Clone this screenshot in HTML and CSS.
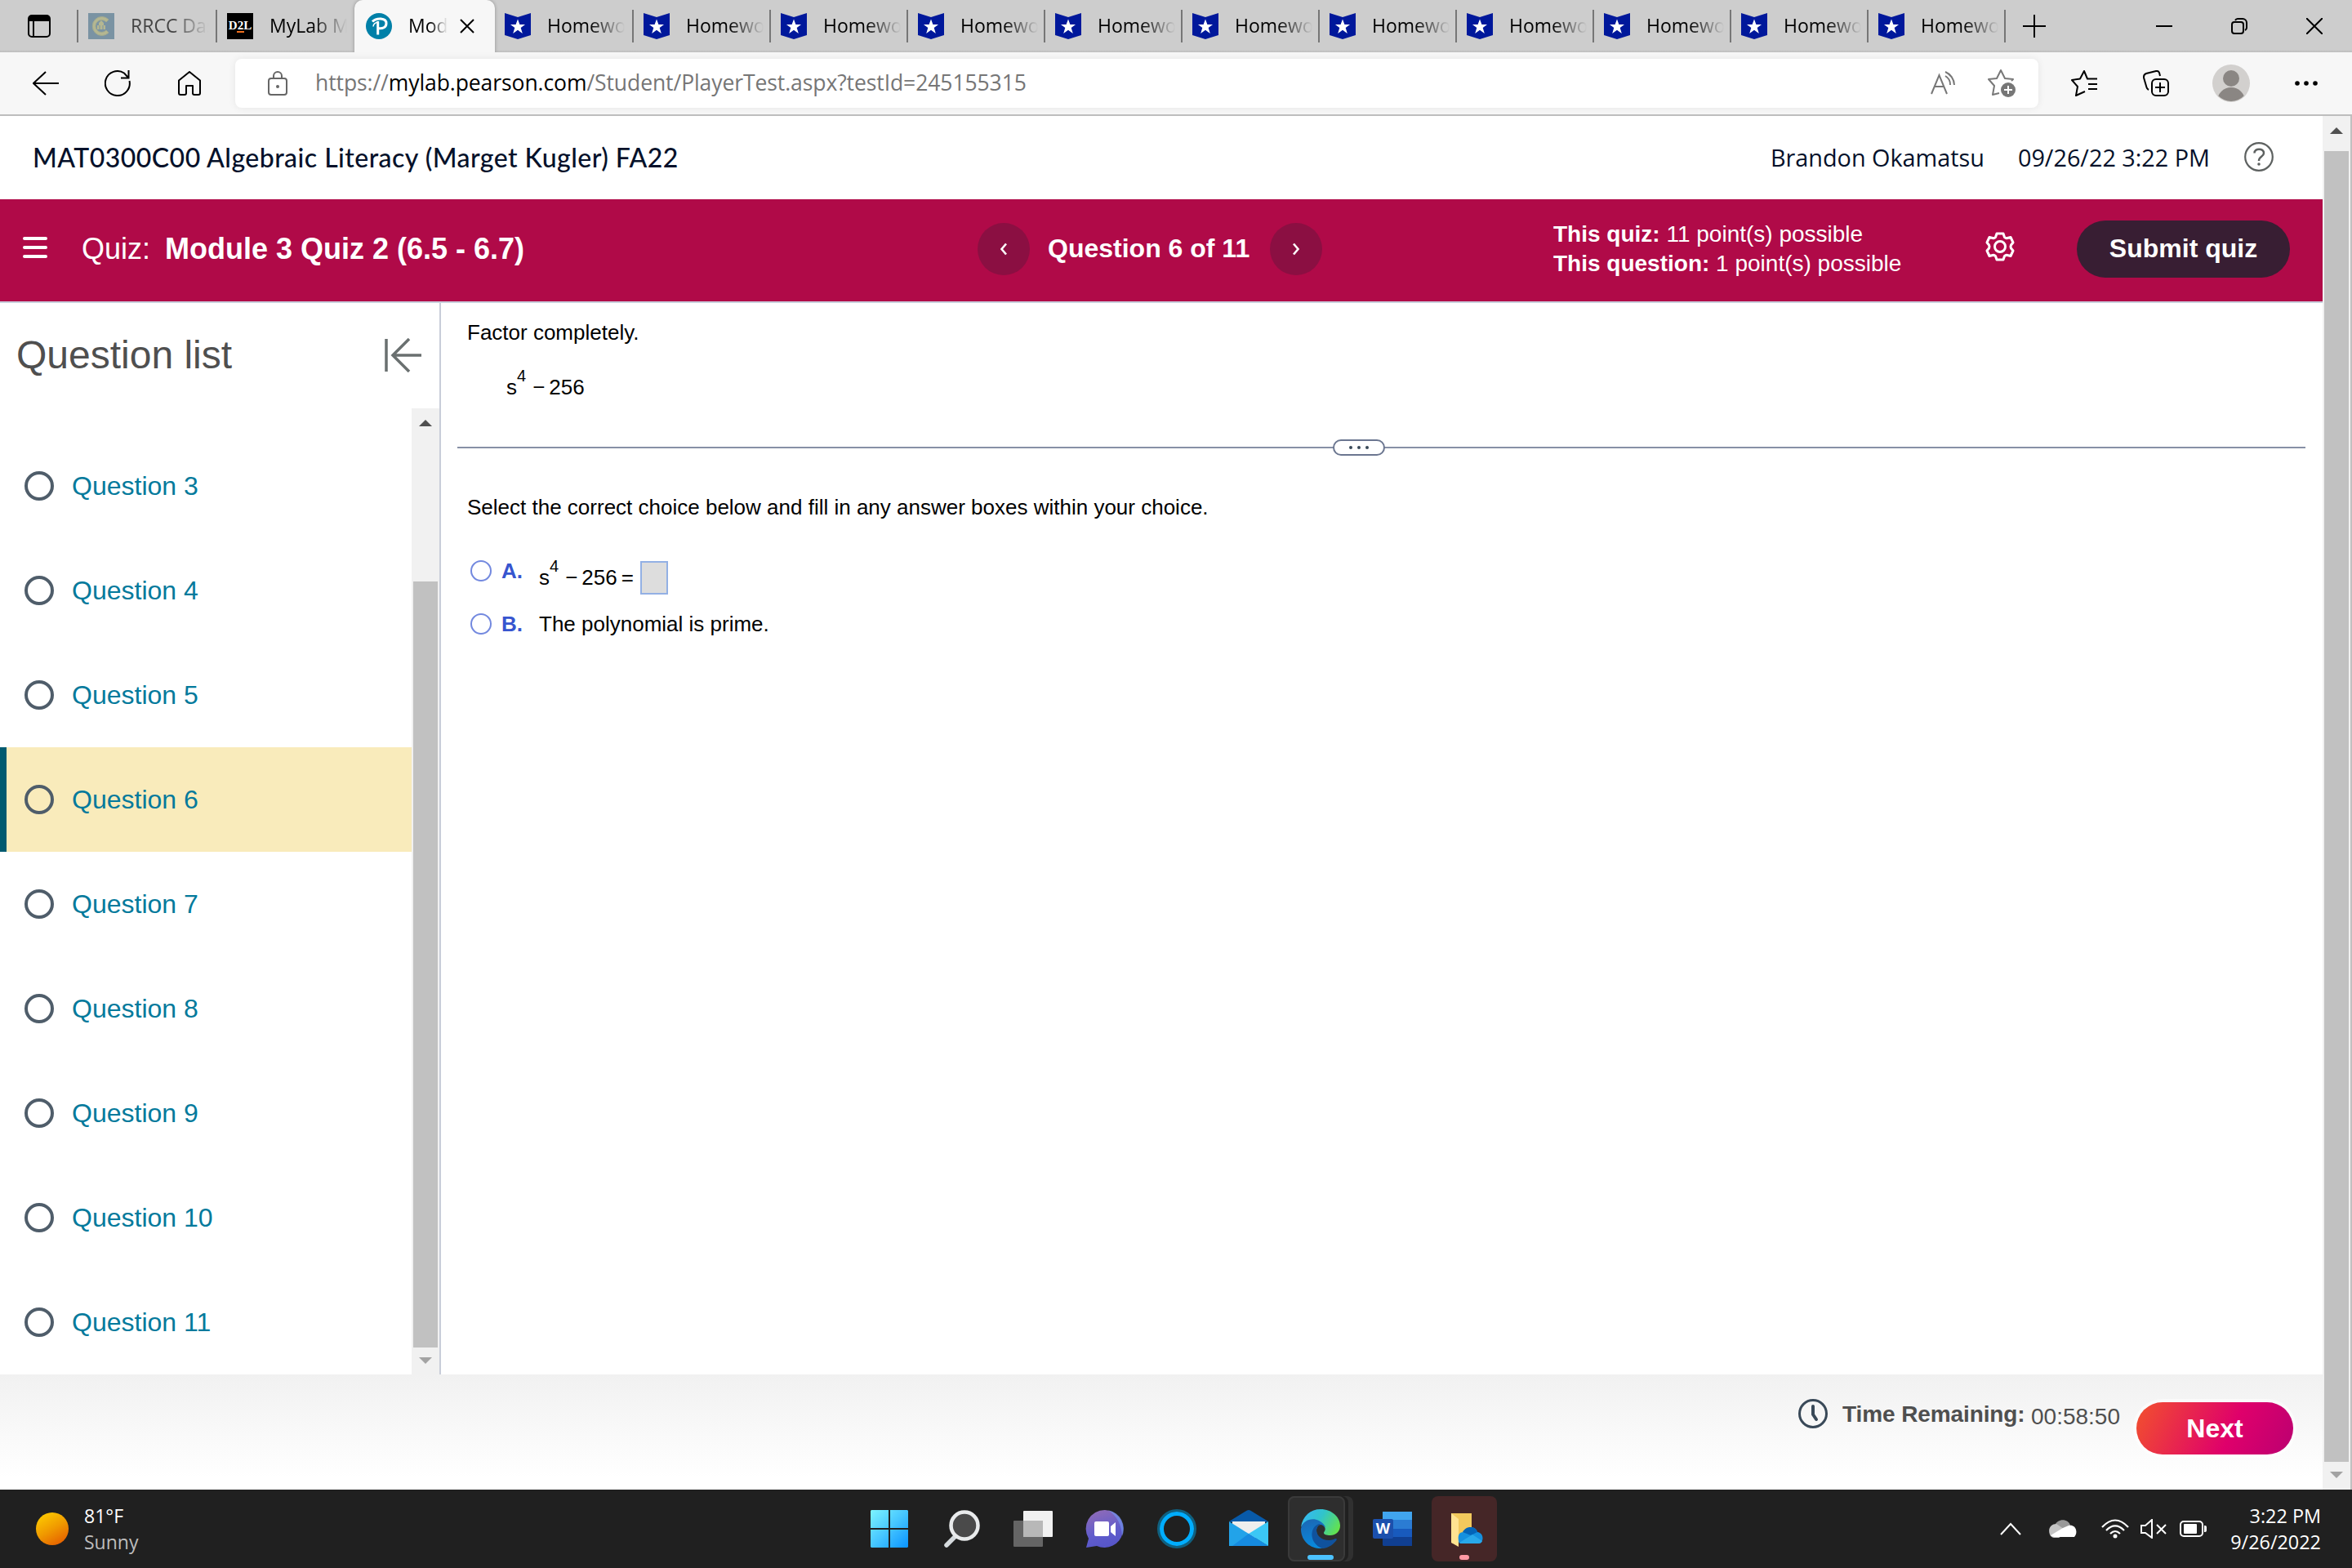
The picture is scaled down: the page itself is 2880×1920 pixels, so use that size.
FILE: index.html
```html
<!DOCTYPE html>
<html lang="en">
<head>
    <meta charset="UTF-8">
    <meta name="viewport" content="width=device-width, initial-scale=1.0">
    <title>Module 3 Quiz 2 (6.5 - 6.7)</title>
    <link rel="stylesheet" href="styles.css">
</head>
<body>
    <!-- shared shapes -->
    <svg class="defs" width="0" height="0">
        <symbol id="badge" viewBox="0 0 32 32">
            <path d="M0 0 16 5 32 0V27L16 32 0 27Z" fill="#00189b"/>
            <path d="M16 7.5 18.4 14H25L19.7 17.9 21.8 25 16 20.8 10.2 25 12.3 17.9 7 14H13.6Z" fill="#fff"/>
        </symbol>
    </svg>

    <div class="tabstrip">
        <div class="tab-actions">
            <svg width="28" height="28" viewBox="0 0 28 28"><rect x="1" y="1" width="26" height="26" rx="4" fill="none" stroke="#000" stroke-width="2"/><path d="M1 8V4a3 3 0 0 1 3-3h20a3 3 0 0 1 3 3v4Z"/><path d="M7 8v19" stroke="#000" stroke-width="2"/></svg>
        </div>
        <div class="tab first muted">
            <svg class="favicon" viewBox="0 0 32 32"><rect width="32" height="32" fill="#7a93a3"/><path d="M25 8A11.500 11.500 0 1 0 25 24L22 21A7.500 7.500 0 1 1 22 11Z" fill="#b5b791" stroke="#a3ab8f"/><path d="M11 20v-5h2v-3l3-3 3 3v3h2v5Z" fill="#b5b791"/><path d="M14 20v-5m4 5v-5" stroke="#7a93a3"/></svg>
            <span class="tab-label">RRCC Dashboard</span>
        </div>
        <div class="tab plain">
            <span class="favicon d2l">D2L</span>
            <span class="tab-label">MyLab Math</span>
        </div>
        <div class="tab active">
            <svg class="favicon" viewBox="0 0 32 32"><circle cx="16" cy="16" r="16" fill="#0080a8"/><path d="M8 10.500C13 5.500 25 5.500 25 12.500C25 17.500 20.500 19.500 15 18.500M14.700 10V26.500" fill="none" stroke="#fff" stroke-width="3"/><path d="M9 16.500c0-3 3-5.500 7-5.500" fill="none" stroke="#fff" stroke-width="1.500"/></svg>
            <span class="tab-label">Module 3</span>
            <svg class="tab-close" width="18" height="18" viewBox="0 0 18 18"><path d="M1 1 17 17M17 1 1 17" stroke="#000" stroke-width="2"/></svg>
        </div>
        <div class="tab first"><svg class="favicon"><use href="#badge"/></svg><span class="tab-label">Homework</span></div>
        <div class="tab"><svg class="favicon"><use href="#badge"/></svg><span class="tab-label">Homework</span></div>
        <div class="tab"><svg class="favicon"><use href="#badge"/></svg><span class="tab-label">Homework</span></div>
        <div class="tab"><svg class="favicon"><use href="#badge"/></svg><span class="tab-label">Homework</span></div>
        <div class="tab"><svg class="favicon"><use href="#badge"/></svg><span class="tab-label">Homework</span></div>
        <div class="tab"><svg class="favicon"><use href="#badge"/></svg><span class="tab-label">Homework</span></div>
        <div class="tab"><svg class="favicon"><use href="#badge"/></svg><span class="tab-label">Homework</span></div>
        <div class="tab"><svg class="favicon"><use href="#badge"/></svg><span class="tab-label">Homework</span></div>
        <div class="tab"><svg class="favicon"><use href="#badge"/></svg><span class="tab-label">Homework</span></div>
        <div class="tab"><svg class="favicon"><use href="#badge"/></svg><span class="tab-label">Homework</span></div>
        <div class="tab"><svg class="favicon"><use href="#badge"/></svg><span class="tab-label">Homework</span></div>
        <svg class="new-tab" width="28" height="28" viewBox="0 0 28 28"><path d="M14 0v28M0 14h28" stroke="#000" stroke-width="2"/></svg>
        <div class="window-controls">
            <svg width="20" height="20" viewBox="0 0 20 20"><path d="M0 10h20" stroke="#000" stroke-width="2"/></svg>
            <svg width="20" height="20" viewBox="0 0 20 20" fill="none" stroke="#000" stroke-width="2"><rect x="1" y="5" width="14" height="14" rx="3"/><path d="M5 3Q6 1 8 1h6a5 5 0 0 1 5 5v6q0 2-2 3"/></svg>
            <svg width="20" height="20" viewBox="0 0 20 20"><path d="M0 0 20 20M20 0 0 20" stroke="#000" stroke-width="2"/></svg>
        </div>
    </div>

    <div class="toolbar">
        <div class="nav-buttons">
            <svg width="32" height="30" viewBox="0 0 32 30" fill="none" stroke="#000" stroke-width="2"><path d="M32 15H1M16 1 1 15 16 29"/></svg>
            <svg width="32" height="32" viewBox="0 0 32 32" fill="none" stroke="#000" stroke-width="2"><path d="M30.500 13A15 15 0 1 1 24 3.500L29 9M29.500 0V9.500H20"/></svg>
            <svg class="home" width="28" height="30" viewBox="0 0 28 30" fill="none" stroke="#000" stroke-width="2" stroke-linejoin="round"><path d="M1 11.500 14 1 27 11.500V27q0 2-2 2H20q-2 0-2-2V18H10v9q0 2-2 2H3q-2 0-2-2Z"/></svg>
        </div>
        <div class="address-bar">
            <svg width="24" height="30" viewBox="0 0 24 30" fill="none" stroke="#666" stroke-width="2"><rect x="1" y="9" width="22" height="20" rx="3"/><path d="M7 9V6a5 5 0 0 1 10 0v3"/><circle cx="12" cy="19" r="2" fill="#666" stroke="none"/></svg>
            <span class="url">https://<span class="host">mylab.pearson.com</span>/Student/PlayerTest.aspx?testId=245155315</span>
            <svg class="read-aloud" width="30" height="30" viewBox="0 0 30 30" fill="none" stroke="#777" stroke-width="2"><path d="M1 28 10.500 5 20 28M5 19H16M18 1a18 18 0 0 1 11 16M18 6a12 12 0 0 1 6 11"/></svg>
            <svg width="34" height="34" viewBox="0 0 34 34" fill="none" stroke="#777" stroke-width="2" stroke-linejoin="round"><path d="M14 29 6 31 8 20 1 12 11 11 16 1 21 11 31 12 29 14"/><circle cx="25" cy="25" r="9" fill="#777" stroke="none"/><path d="M25 20v10M20 25h10" stroke="#fff"/></svg>
        </div>
        <div class="toolbar-icons">
            <svg width="32" height="32" viewBox="0 0 32 32" fill="none" stroke="#000" stroke-width="2" stroke-linejoin="round"><path d="M17 26 6 31 8 20 1 12 11 10.500 16 1 20 10.500H32M21 17H32M21 23H32"/></svg>
            <svg width="32" height="32" viewBox="0 0 32 32" fill="none" stroke="#000" stroke-width="2"><rect x="11" y="11" width="20" height="20" rx="5"/><path d="M21 15v12M15 21h12M7 24Q5 23 4.500 21L1 9Q.7 5 4 4L16 1q3-.5 4 2l1 4"/></svg>
            <svg class="avatar" width="46" height="46" viewBox="0 0 46 46"><clipPath id="avatarClip"><circle cx="23" cy="23" r="22"/></clipPath><circle cx="23" cy="23" r="23" fill="#d2d0ce"/><circle cx="23" cy="17" r="10" fill="#8a8683"/><circle cx="23" cy="45" r="17" fill="#8a8683" clip-path="url(#avatarClip)"/></svg>
            <svg width="28" height="6" viewBox="0 0 28 6"><circle cx="3" cy="3" r="2.800"/><circle cx="14" cy="3" r="2.800"/><circle cx="25" cy="3" r="2.800"/></svg>
        </div>
    </div>

    <div class="viewport">
        <div class="page">
            <header class="course-header">
                <span class="course-title">MAT0300C00 Algebraic Literacy (Marget Kugler) FA22</span>
                <span class="user-name">Brandon Okamatsu</span>
                <span class="date">09/26/22 3:22 PM</span>
                <svg width="36" height="36" viewBox="0 0 36 36" fill="none" stroke="#5d6160" stroke-width="2.200"><circle cx="18" cy="18" r="16.800"/><path d="M12.500 13.500C12.500 7 24 7 24 13.500C24 18 18 17 18 23" stroke-width="2.500"/><circle cx="18" cy="27" r="1.800" fill="#5d6160" stroke="none"/></svg>
            </header>

            <div class="quiz-bar">
                <div class="menu"><i></i><i></i><i></i></div>
                <span class="quiz-word">Quiz:</span>
                <h1>Module 3 Quiz 2 (6.5 - 6.7)</h1>
                <div class="pager">
                    <button class="round"><svg width="10" height="16" viewBox="0 0 10 16"><path d="M8 1.500 2.500 8 8 14.500" fill="none" stroke="#fff" stroke-width="2.600"/></svg></button>
                    <span>Question 6 of 11</span>
                    <button class="round"><svg width="10" height="16" viewBox="0 0 10 16"><path d="M2 1.500 7.500 8 2 14.500" fill="none" stroke="#fff" stroke-width="2.600"/></svg></button>
                </div>
                <div class="points">
                    <div><b>This quiz:</b> 11 point(s) possible</div>
                    <div><b>This question:</b> 1 point(s) possible</div>
                </div>
                <svg class="gear" width="36" height="36" viewBox="0 0 36 36" fill="none" stroke="#fff" stroke-width="3" stroke-linejoin="round"><path d="M14 2H22L23.500 6.500Q25 8 27 7.500L31 6.500 34 13 31.500 16Q30.500 18 31.500 20L34 23 31 29.500 27 28.500Q25 28 23.500 29.500L22 34H14L12.500 29.500Q11 28 9 28.500L5 29.500 2 23 4.500 20Q5.500 18 4.500 16L2 13 5 6.500 9 7.500Q11 8 12.500 6.500Z"/><circle cx="18" cy="18" r="6.500"/></svg>
                <button class="submit">Submit quiz</button>
            </div>

            <div class="player">
                <aside class="sidebar">
                    <div class="sidebar-head">
                        <h2>Question list</h2>
                        <svg width="46" height="42" viewBox="0 0 46 42" fill="none" stroke="#6a7070" stroke-width="3.500"><path d="M3 1V41M46 21H12M31 1 11 21 31 41"/></svg>
                    </div>
                    <div class="sidebar-body">
                        <ul class="question-list">
                            <li><i></i>Question 3</li>
                            <li><i></i>Question 4</li>
                            <li><i></i>Question 5</li>
                            <li class="current"><i></i>Question 6</li>
                            <li><i></i>Question 7</li>
                            <li><i></i>Question 8</li>
                            <li><i></i>Question 9</li>
                            <li><i></i>Question 10</li>
                            <li><i></i>Question 11</li>
                        </ul>
                        <div class="scrollbar list-scroll">
                            <span class="arrow up"></span>
                            <span class="thumb"></span>
                            <span class="arrow down"></span>
                        </div>
                    </div>
                </aside>

                <main class="question">
                    <p class="prompt">Factor completely.</p>
                    <p class="math problem">s<span class="exp">4</span><span class="minus">−</span>256</p>
                    <div class="divider"><span class="handle"><i></i><i></i><i></i></span></div>
                    <p class="prompt instructions">Select the correct choice below and fill in any answer boxes within your choice.</p>
                    <div class="choice choice-a">
                        <span class="radio"></span>
                        <b>A.</b>
                        <span class="math">s<span class="exp">4</span><span class="minus">−</span>256<span class="equals">=</span></span>
                        <span class="answer-box"></span>
                    </div>
                    <div class="choice choice-b">
                        <span class="radio"></span>
                        <b>B.</b>
                        <span>The polynomial is prime.</span>
                    </div>
                </main>
            </div>

            <footer class="player-footer">
                <svg width="36" height="36" viewBox="0 0 36 36" fill="none" stroke="#394958" stroke-width="3"><circle cx="18" cy="18" r="16.500"/><path d="M18 9V19L22 25" stroke-width="4" stroke-linecap="round" stroke-linejoin="round"/></svg>
                <b class="time-label">Time Remaining:</b>
                <span class="time">00:58:50</span>
                <button class="next">Next</button>
            </footer>
        </div>
        <div class="scrollbar page-scroll">
            <span class="arrow up"></span>
            <span class="thumb"></span>
            <span class="arrow down"></span>
        </div>
    </div>

    <div class="taskbar">
        <div class="weather">
            <span class="sun"></span>
            <div>
                <div>81°F</div>
                <div class="condition">Sunny</div>
            </div>
        </div>
        <div class="apps">
            <!-- start -->
            <div class="app">
                <svg width="48" height="48" viewBox="0 0 48 48"><defs><linearGradient id="win" x1="0" y1="0" x2="1" y2="1"><stop offset="0" stop-color="#7df4ff"/><stop offset=".5" stop-color="#46c6ff"/><stop offset="1" stop-color="#0a93ff"/></linearGradient></defs><path d="M2 1H23V23H1V2ZM25 1H46L47 2V23H25ZM1 25H23V47H2L1 46ZM25 25H47V46L46 47H25Z" fill="url(#win)"/></svg>
            </div>
            <!-- search -->
            <div class="app">
                <svg width="48" height="48" viewBox="0 0 48 48"><path d="M17 33 6 44" stroke="#d5dadd" stroke-width="5.500" stroke-linecap="round"/><circle cx="28" cy="20" r="16.500" fill="#4a4a4a" stroke="#e9ebec" stroke-width="4.500"/></svg>
            </div>
            <!-- task view -->
            <div class="app">
                <svg width="48" height="48" viewBox="0 0 48 48"><rect x="12" y="2" width="36" height="32" rx="1" fill="#f1f1f1"/><rect y="14" width="36" height="32" rx="1" fill="#656565"/><path d="M12 14h24v20H12Z" fill="#b8b8b8"/></svg>
            </div>
            <!-- chat -->
            <div class="app">
                <svg width="48" height="48" viewBox="0 0 48 48"><defs><linearGradient id="chat" x1=".3" y1="0" x2=".6" y2="1"><stop offset="0" stop-color="#8f6bb8"/><stop offset=".6" stop-color="#605ccc"/><stop offset="1" stop-color="#5655c8"/></linearGradient></defs><path d="M24 1A23 23 0 1 1 14 45L1 47 4 36A23 23 0 0 1 24 1Z" fill="url(#chat)"/><path d="M28 1.300A23 23 0 0 1 45 33Q44 12 28 1.300Z" fill="#7392eb" opacity=".7"/><rect x="11" y="15" width="18" height="18" rx="2" fill="#fff"/><path d="M31 21 37 16V33L31 28Z" fill="#fff"/></svg>
            </div>
            <!-- cortana -->
            <div class="app">
                <svg width="48" height="48" viewBox="0 0 48 48"><circle cx="24" cy="24" r="22.500" fill="none" stroke="#10607f" stroke-width="3"/><circle cx="24" cy="24" r="18.500" fill="none" stroke="#00adff" stroke-width="5"/></svg>
            </div>
            <!-- mail -->
            <div class="app">
                <svg width="48" height="48" viewBox="0 0 48 48"><path d="M0 15 22 1.500q2-1 4 0L48 15 24 22Z" fill="#085aa9"/><path d="M4 15H44V35H4Z" fill="#eee"/><path d="M0 15 24 30 48 45H0Z" fill="#22a3e9"/><path d="M48 15 24 30 48 45Z" fill="#3bc8f5"/><path d="M24 30 48 45H4Z" fill="#168be0"/></svg>
            </div>
            <!-- edge -->
            <div class="app">
                <div class="stack">
                    <div class="running">
                        <svg width="48" height="48" viewBox="0 0 48 48"><defs><linearGradient id="edgeTop" x1="0" y1=".3" x2="1" y2=".7"><stop offset="0" stop-color="#36b9f4"/><stop offset=".45" stop-color="#31c4ca"/><stop offset="1" stop-color="#65e348"/></linearGradient><linearGradient id="edgeBody" x1=".2" y1="0" x2=".5" y2="1"><stop offset="0" stop-color="#1b68b5"/><stop offset="1" stop-color="#078ce0"/></linearGradient></defs><path d="M0 22C2 8 12 0 24 0C38 0 48 10 48 20C48 28 42 32 36 32C31 32 28 31 28 29C28 27 31 26 29 22C26 15 8 8 0 22Z" fill="url(#edgeTop)"/><path d="M0 24C2 13 14 10 22 14C28 17 30 21 30 23C24 15 19 21 19 26C19 36 30 43 42 38C36 46 28 48 22 48C9 47 0 37 0 24Z" fill="url(#edgeBody)"/><path d="M22 18C10 22 10 42 26 48C34 48 41 42 44 37Q43 35 40 37C29 41 18 33 19 25Q20 20 24 18Z" fill="#10529d"/></svg>
                        <span class="indicator"></span>
                    </div>
                </div>
            </div>
            <!-- word -->
            <div class="app">
                <svg width="48" height="48" viewBox="0 0 48 48"><path d="M12 3H48V14H12Z" fill="#41a5ee"/><path d="M12 13H48V24H12Z" fill="#2b7cd3"/><path d="M12 24H48V35H12Z" fill="#185abd"/><path d="M12 34H48V45H13L12 44Z" fill="#103f91"/><rect y="12" width="25" height="24" rx="2" fill="#1b50ad"/><text x="12.500" y="30" class="word-letter">W</text></svg>
            </div>
            <!-- file explorer -->
            <div class="app">
                <div class="alert">
                    <svg width="48" height="48" viewBox="0 0 48 48"><path d="M8 5H33V40H8Z" fill="#f2c95d"/><path d="M8 5 17 12V46L8 41Z" fill="#ffe391"/><path d="M17 39C16 33 17 28 23 28C26 20 38 20 40 28C49 29 48 42 41 42H20Q17 42 17 39Z" fill="#1490df"/><path d="M22 28C26 20 38 20 40 28L32 32Z" fill="#0364b8"/><path d="M18 41 34 31 46 39Q45 42 41 42H20Z" fill="#28a8ea"/></svg>
                    <span class="indicator"></span>
                </div>
            </div>
        </div>
        <div class="tray">
            <svg width="26" height="16" viewBox="0 0 26 16"><path d="M1 15 13 2 25 15" fill="none" stroke="#fff" stroke-width="2"/></svg>
            <svg class="cloud" width="34" height="22" viewBox="0 0 34 22"><path d="M7 7C10-2 24-2 26 7L17 13Z" fill="#999"/><path d="M1 18C-2 10 3 5 9 5L24 15 12 22H6Q2 21 1 18Z" fill="#c4c4c4"/><path d="M2 19 17 10 24 7C33 5 36 16 31 21H7Q4 21 2 19Z" fill="#fff"/></svg>
            <svg class="wifi" width="34" height="24" viewBox="0 0 34 24" fill="none" stroke="#fff" stroke-width="2.200"><path d="M1 10Q17-7 33 10M6 14Q17 3 28 14M11 18Q17 12 23 18"/><circle cx="17" cy="21" r="2.500" fill="#fff" stroke="none"/></svg>
            <svg class="speaker" width="34" height="24" viewBox="0 0 34 24" fill="none" stroke="#fff" stroke-width="2"><path d="M1 8H6L14 1V23L6 17H1ZM20 7 31 18M31 7 20 18"/></svg>
            <svg class="battery" width="34" height="20" viewBox="0 0 34 20"><rect x="1" y="1" width="27" height="18" rx="4" fill="none" stroke="#fff" stroke-width="2"/><rect x="5" y="4" width="16" height="12" rx="1" fill="#fff"/><path d="M30 6h1q2 0 2 2v4q0 2-2 2h-1Z" fill="#fff"/></svg>
            <div class="clock">
                <div>3:22 PM</div>
                <div>9/26/2022</div>
            </div>
        </div>
    </div>
</body>
</html>
```

FILE: styles.css
```css
* {
    box-sizing: border-box;
}
body {
    margin: 0;
    width: 2880px;
    height: 1920px;
    overflow: hidden;
    display: flex;
    flex-direction: column;
    background: #fff;
    font-family: "Liberation Sans", Arial, sans-serif;
    color: #000;
}
h1, h2, p, ul {
    margin: 0;
    padding: 0;
}
svg {
    display: block;
    flex: none;
}
button {
    border: none;
    padding: 0;
    color: #fff;
    font-family: inherit;
    font-weight: bold;
    font-size: 32px;
}
.defs {
    position: absolute;
}

/* browser tabs */
.tabstrip {
    height: 64px;
    flex: none;
    display: flex;
    align-items: center;
    background: linear-gradient(#cdcdcd 61px, #bcbcbc);
    font-family: "Open Sans", "Noto Sans", sans-serif;
    font-size: 23px;
}
.tab-actions {
    width: 96px;
    height: 40px;
    padding-left: 34px;
    display: flex;
    align-items: center;
    border-right: 2px solid #767676;
}
.tab {
    width: 168px;
    height: 40px;
    flex: none;
    padding-left: 12px;
    display: flex;
    align-items: center;
    gap: 20px;
    border-right: 2px solid #767676;
}
.tab.first {
    width: 170px;
}
.tab.plain {
    border-right: none;
}
.tab.muted {
    color: #444;
}
.favicon {
    width: 32px;
    height: 32px;
    flex: none;
}
.d2l {
    background: linear-gradient(#f0701f, #f0701f) 12px 22px / 9px 2px no-repeat #000;
    color: #fff;
    font: bold 15px/30px "Liberation Serif", serif;
    text-align: center;
    white-space: nowrap;
}
.tab-label {
    width: 95px;
    flex: none;
    line-height: 34px;
    margin-top: -2px;
    white-space: nowrap;
    overflow: hidden;
    -webkit-mask-image: linear-gradient(90deg, #000 55%, transparent);
    mask-image: linear-gradient(90deg, #000 55%, transparent);
}
.tab.active {
    position: relative;
    width: 172px;
    height: 64px;
    padding-left: 14px;
    background: #f7f7f7;
    border: none;
    border-radius: 10px 10px 0 0;
    box-shadow: 0 0 4px rgba(0,0,0,0.3);
    clip-path: inset(0 -6px 0 -6px);
}
.tab.active .tab-label {
    width: 48px;
}
.tab-close {
    margin-left: -5px;
}
.new-tab {
    margin-left: 21px;
}
.window-controls {
    margin-left: auto;
    margin-right: 36px;
    display: flex;
    gap: 72px;
}

/* toolbar */
.toolbar {
    height: 78px;
    flex: none;
    display: flex;
    align-items: center;
    background: #f7f7f7;
    border-bottom: 2px solid #bdbdbd;
}
.nav-buttons {
    width: 288px;
    padding-left: 40px;
    display: flex;
    align-items: center;
    gap: 56px;
}
.home {
    margin-left: 2px;
}
.address-bar {
    width: 2208px;
    height: 60px;
    padding: 0 28px 0 40px;
    display: flex;
    align-items: center;
    background: #fff;
    border-radius: 8px;
    box-shadow: 0 0 10px rgba(0,0,0,0.08);
}
.url {
    margin-left: 34px;
    margin-top: -2px;
    flex: 1;
    font-family: "Open Sans", "Noto Sans", sans-serif;
    font-size: 26.5px;
    letter-spacing: -0.08px;
    color: #767676;
    white-space: nowrap;
}
.host {
    color: #000;
}
.read-aloud {
    margin-right: 40px;
}
.toolbar-icons {
    padding-left: 40px;
    display: flex;
    align-items: center;
    gap: 56px;
}
.avatar {
    margin: 0 -1px 0 -3px;
}

/* page */
.viewport {
    flex: 1;
    min-height: 0;
    display: flex;
}
.page {
    width: 2844px;
    display: flex;
    flex-direction: column;
}
.course-header {
    height: 102px;
    flex: none;
    padding: 0 60px 2px 40px;
    display: flex;
    align-items: center;
    font-family: "Open Sans", "Noto Sans", sans-serif;
    font-size: 28.8px;
    color: #05112a;
    white-space: nowrap;
}
.course-title {
    flex: 1;
    font-family: Lato, sans-serif;
    font-size: 32px;
    font-weight: 500;
    letter-spacing: 0.46px;
}
.user-name {
    margin-right: 41px;
}
.date {
    margin-right: 42px;
}

.quiz-bar {
    height: 127px;
    flex: none;
    padding: 0 40px 4px 28px;
    display: flex;
    align-items: center;
    background: #b00a48;
    border-bottom: 2px solid #c9cfdc;
    color: #fff;
    white-space: nowrap;
}
.menu {
    width: 30px;
    margin: -3px 42px 0 0;
    display: flex;
    flex-direction: column;
    gap: 7px;
}
.menu i {
    height: 4px;
    border-radius: 2px;
    background: #fff;
}
.quiz-word {
    width: 102px;
    font-size: 36px;
}
.quiz-bar h1 {
    width: 995px;
    font-size: 36px;
}
.pager {
    width: 705px;
    display: flex;
    align-items: center;
    font-size: 32px;
    font-weight: bold;
}
.pager span {
    width: 294px;
    padding-left: 22px;
}
.round {
    width: 64px;
    height: 64px;
    display: flex;
    align-items: center;
    justify-content: center;
    border-radius: 50%;
    background: #8b0f42;
}
.points {
    width: 529px;
    font-size: 28px;
    line-height: 36px;
}
.gear {
    margin-top: -6px;
}
.submit {
    width: 261px;
    height: 70px;
    margin-left: 76px;
    border-radius: 35px;
    background: #381e33;
}

.player {
    flex: 1;
    min-height: 0;
    display: flex;
}
.sidebar {
    width: 540px;
    display: flex;
    flex-direction: column;
    border-right: 2px solid #c8cdd9;
}
.sidebar-head {
    height: 129px;
    padding: 0 22px 2px 20px;
    display: flex;
    align-items: center;
    justify-content: space-between;
}
.sidebar-head h2 {
    font-size: 48px;
    font-weight: normal;
    color: #4f4f4f;
}
.sidebar-body {
    flex: 1;
    display: flex;
}
.question-list {
    width: 504px;
    padding-top: 31px;
    list-style: none;
}
.question-list li {
    height: 128px;
    padding-left: 30px;
    display: flex;
    align-items: center;
    gap: 22px;
    font-size: 32px;
    color: #047a9c;
}
.question-list li i {
    width: 36px;
    height: 36px;
    border: 4px solid #4f5d6a;
    border-radius: 50%;
}
.question-list .current {
    padding-left: 22px;
    border-left: 8px solid #005a70;
    background: #f9ebbb;
}

/* scrollbars */
.scrollbar {
    display: flex;
    flex-direction: column;
    align-items: center;
    background: #f1f1f1;
}
.thumb {
    flex: 1;
    width: 30px;
    background: #c1c1c1;
}
.arrow {
    width: 0;
    height: 0;
    border-left: 8px solid transparent;
    border-right: 8px solid transparent;
}
.up {
    margin-top: 14px;
    border-bottom: 8px solid #505050;
}
.down {
    margin-top: 12px;
    margin-bottom: 13px;
    border-top: 8px solid #a3a3a3;
}
.list-scroll {
    width: 34px;
}
.list-scroll .up {
    margin-bottom: 190px;
}
.page-scroll {
    width: 36px;
    border-right: 2px solid #c0c0c0;
}
.page-scroll .up {
    margin-bottom: 21px;
}
.page-scroll .down {
    margin-bottom: 14px;
}

/* question */
.question {
    flex: 1;
    padding: 20px 21px 0 20px;
    font-size: 26px;
    line-height: 32px;
}
.prompt {
    padding-left: 12px;
}
.math {
    white-space: nowrap;
}
.problem {
    margin-top: 35px;
    padding-left: 60px;
}
.exp {
    font-size: 20px;
    line-height: 0;
    vertical-align: 16px;
}
.minus {
    margin: 0 5px 0 8px;
}
.equals {
    margin-left: 5px;
}
.divider {
    height: 20px;
    margin-top: 48px;
    display: flex;
    align-items: center;
    justify-content: center;
    background: linear-gradient(#8790a6, #8790a6) center / 100% 2px no-repeat;
}
.handle {
    width: 64px;
    height: 20px;
    margin-right: 55px;
    display: flex;
    align-items: center;
    justify-content: center;
    gap: 6px;
    background: #fff;
    border: 2px solid #6b7690;
    border-radius: 10px;
}
.handle i {
    width: 4px;
    height: 4px;
    border-radius: 50%;
    background: #394958;
}
.instructions {
    margin-top: 47px;
}
.choice {
    padding-left: 16px;
    display: flex;
    align-items: center;
}
.choice b {
    width: 46px;
    color: #3755cf;
}
.radio {
    width: 26px;
    height: 26px;
    margin-right: 12px;
    border: 2.5px solid #7389df;
    border-radius: 50%;
}
.choice-a {
    height: 42px;
    margin-top: 49px;
}
.choice-a .radio, .choice-a b {
    margin-top: -17px;
}
.answer-box {
    width: 34px;
    height: 41px;
    margin-left: 8px;
    border: 2px solid #93b0e4;
    background: #ddd;
}
.choice-b {
    margin-top: 20px;
}

.player-footer {
    height: 141px;
    flex: none;
    padding: 30px 36px 0 0;
    display: flex;
    align-items: flex-start;
    justify-content: flex-end;
    background: linear-gradient(#f1f1f1, #fff 90%);
    font-size: 28px;
    line-height: 32px;
    color: #4f4f4f;
}
.time-label {
    width: 231px;
    margin-left: 18px;
    margin-top: 3px;
    letter-spacing: -0.1px;
}
.time {
    width: 129px;
    margin-top: 6px;
}
.next {
    width: 192px;
    height: 64px;
    margin-top: 4px;
    border-radius: 32px;
    background: linear-gradient(115deg, #f2512d, #df006b 60%, #bb0071);
    box-shadow: 0 0 0 4px rgba(255,255,255,0.5);
}

/* taskbar */
.taskbar {
    height: 96px;
    flex: none;
    display: flex;
    align-items: center;
    background: #202020;
    color: #fff;
    font-family: "Open Sans", "Noto Sans", sans-serif;
    font-size: 23px;
    line-height: 32px;
}
.weather {
    width: 1045px;
    padding-left: 44px;
    display: flex;
    align-items: center;
    gap: 19px;
}
.sun {
    width: 40px;
    height: 40px;
    border-radius: 50%;
    background: linear-gradient(150deg, #ffd400, #f09a00 50%, #e35200);
}
.condition {
    color: #bdbdbd;
}
.apps {
    display: flex;
}
.app {
    width: 88px;
    height: 80px;
    display: flex;
    align-items: center;
    justify-content: center;
}
.stack {
    width: 80px;
    height: 80px;
    border-radius: 8px;
    background: #303030;
}
.running, .alert {
    position: relative;
    height: 80px;
    display: flex;
    align-items: center;
    border-radius: 8px;
}
.running {
    width: 70px;
    padding-left: 14px;
    background: #2e2e2e;
    border: 2px solid #3a3a3a;
    box-shadow: 4px 0 0 #202020;
}
.alert {
    width: 80px;
    justify-content: center;
    background: #452627;
}
.indicator {
    position: absolute;
    bottom: 2px;
    left: 50%;
    width: 12px;
    height: 6px;
    margin-left: -6px;
    border-radius: 3px;
    background: #ff99a4;
}
.running .indicator {
    bottom: 0;
    left: 22px;
    width: 32px;
    margin: 0;
    background: #4cc2ff;
}
.word-letter {
    font: bold 18px "Open Sans", sans-serif;
    text-anchor: middle;
    fill: #fff;
}
.tray {
    margin-left: auto;
    padding-right: 38px;
    display: flex;
    align-items: center;
}
.cloud {
    margin-left: 34px;
}
.wifi {
    margin-left: 30px;
}
.speaker {
    margin-left: 14px;
}
.battery {
    margin-left: 14px;
}
.clock {
    width: 139px;
    font-size: 23.4px;
    text-align: right;
}
```
